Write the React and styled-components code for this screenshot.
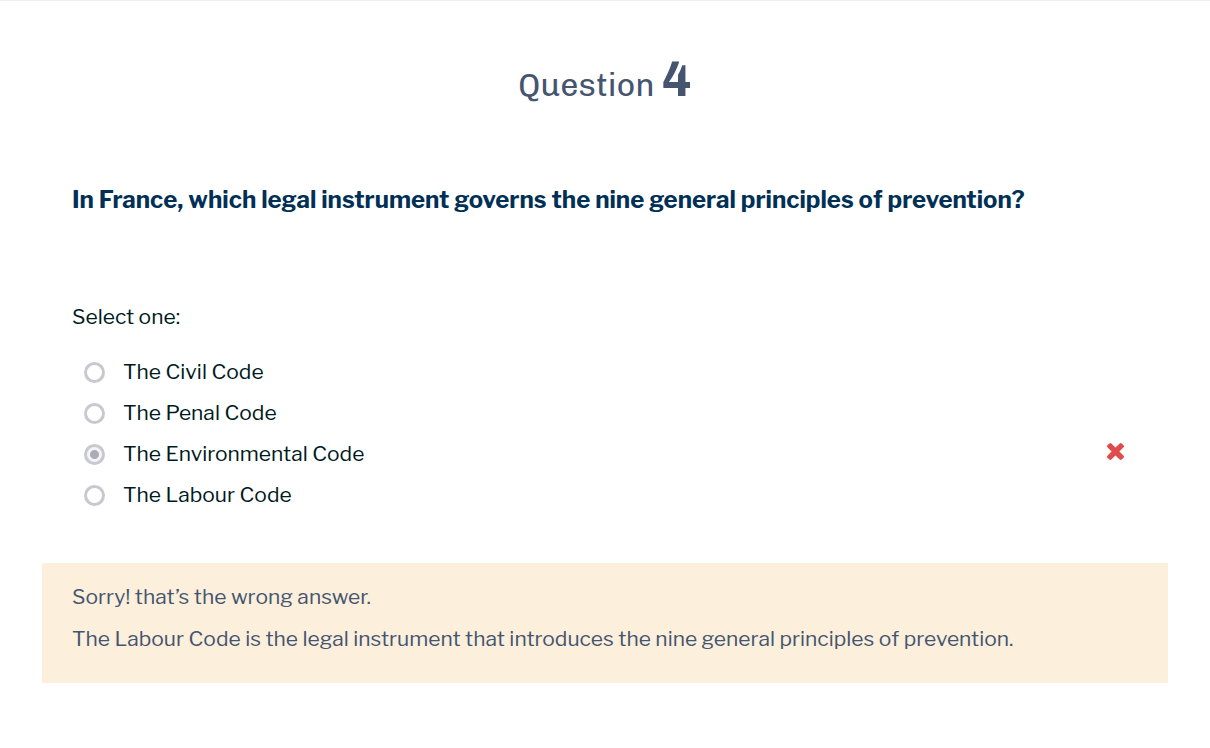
import React from "react";
import styled, { createGlobalStyle } from "styled-components";

const GlobalStyle = createGlobalStyle`
  * { box-sizing: border-box; }
  body {
    margin: 0;
    background: #fff;
    color: #001a1e;
    font-family: "Libre Franklin", Inter, "Liberation Sans", sans-serif;
    font-size: 21px;
    line-height: 30px;
  }
`;

const Page = styled.main`
  padding: 0 42px;
  border-top: 1px solid #ecf0f0;
`;

const Title = styled.h1`
  margin: 0;
  padding-top: 48px;
  text-align: center;
  font-family: Chivo, Inter, sans-serif;
  font-size: 32px;
  line-height: 60px;
  font-weight: 400;
  color: #455570;
`;

const Number = styled.span`
  font-size: 49px;
  font-weight: 700;
`;

const Body = styled.section`
  padding: 67px 30px 0;
`;

const Prompt = styled.h2`
  margin: 0;
  font-size: 24px;
  line-height: 36px;
  font-weight: 700;
  color: #003055;
`;

const Answers = styled.fieldset`
  margin: 84px 0 0;
  padding: 0;
  border: 0;
`;

const Legend = styled.legend`
  padding: 0;
  margin-bottom: 20px;
`;

const Row = styled.div`
  display: flex;
  align-items: center;
  height: 41px;
  padding: 0 14px 0 12px;
`;

const Radio = styled.input`
  appearance: none;
  flex: none;
  width: 21px;
  height: 21px;
  margin: 0 18px 0 0;
  border: 3px solid #c8c8d0;
  border-radius: 50%;
  background: #fff;
  &:checked {
    background: radial-gradient(circle, #acacb8 4px, #f4f4f6 5px);
  }
`;

const Label = styled.label`
  flex: 1;
  padding-bottom: 2px;
`;

const WrongIcon = styled.svg`
  align-self: flex-start;
  width: 17px;
  height: 26px;
  padding-top: 9px;
  fill: #e04b4b;
`;

const Feedback = styled.div`
  margin-top: 47px;
  padding: 19px 30px 29px;
  background: #fcefdc;
  color: #455570;
`;

const Line = styled.p`
  margin: 0 0 12px;
  &:last-child { margin: 0; }
`;

const options = [
  { text: "The Civil Code" },
  { text: "The Penal Code" },
  { text: "The Environmental Code", chosen: true },
  { text: "The Labour Code" },
];

function Wrong() {
  return (
    <WrongIcon viewBox="110 366 1188 1188" role="img" aria-label="Incorrect">
      <path d="M1298 1322q0 40-28 68l-136 136q-28 28-68 28t-68-28l-294-294-294 294q-28 28-68 28t-68-28l-136-136q-28-28-28-68t28-68l294-294-294-294q-28-28-28-68t28-68l136-136q28-28 68-28t68 28l294 294 294-294q28-28 68-28t68 28l136 136q28 28 28 68t-28 68l-294 294 294 294q28 28 28 68z" />
    </WrongIcon>
  );
}

export default function App() {
  return (
    <Page>
      <GlobalStyle />
      <Title>Question <Number>4</Number></Title>
      <Body>
        <Prompt>In France, which legal instrument governs the nine general principles of prevention?</Prompt>
        <Answers>
          <Legend>Select one:</Legend>
          {options.map(({ text, chosen }, i) => (
            <Row key={text}>
              <Radio type="radio" name="answer" id={`answer-${i}`} defaultChecked={chosen} />
              <Label htmlFor={`answer-${i}`}>{text}</Label>
              {chosen && <Wrong />}
            </Row>
          ))}
        </Answers>
      </Body>
      <Feedback>
        <Line>Sorry! that’s the wrong answer.</Line>
        <Line>The Labour Code is the legal instrument that introduces the nine general principles of prevention.</Line>
      </Feedback>
    </Page>
  );
}
